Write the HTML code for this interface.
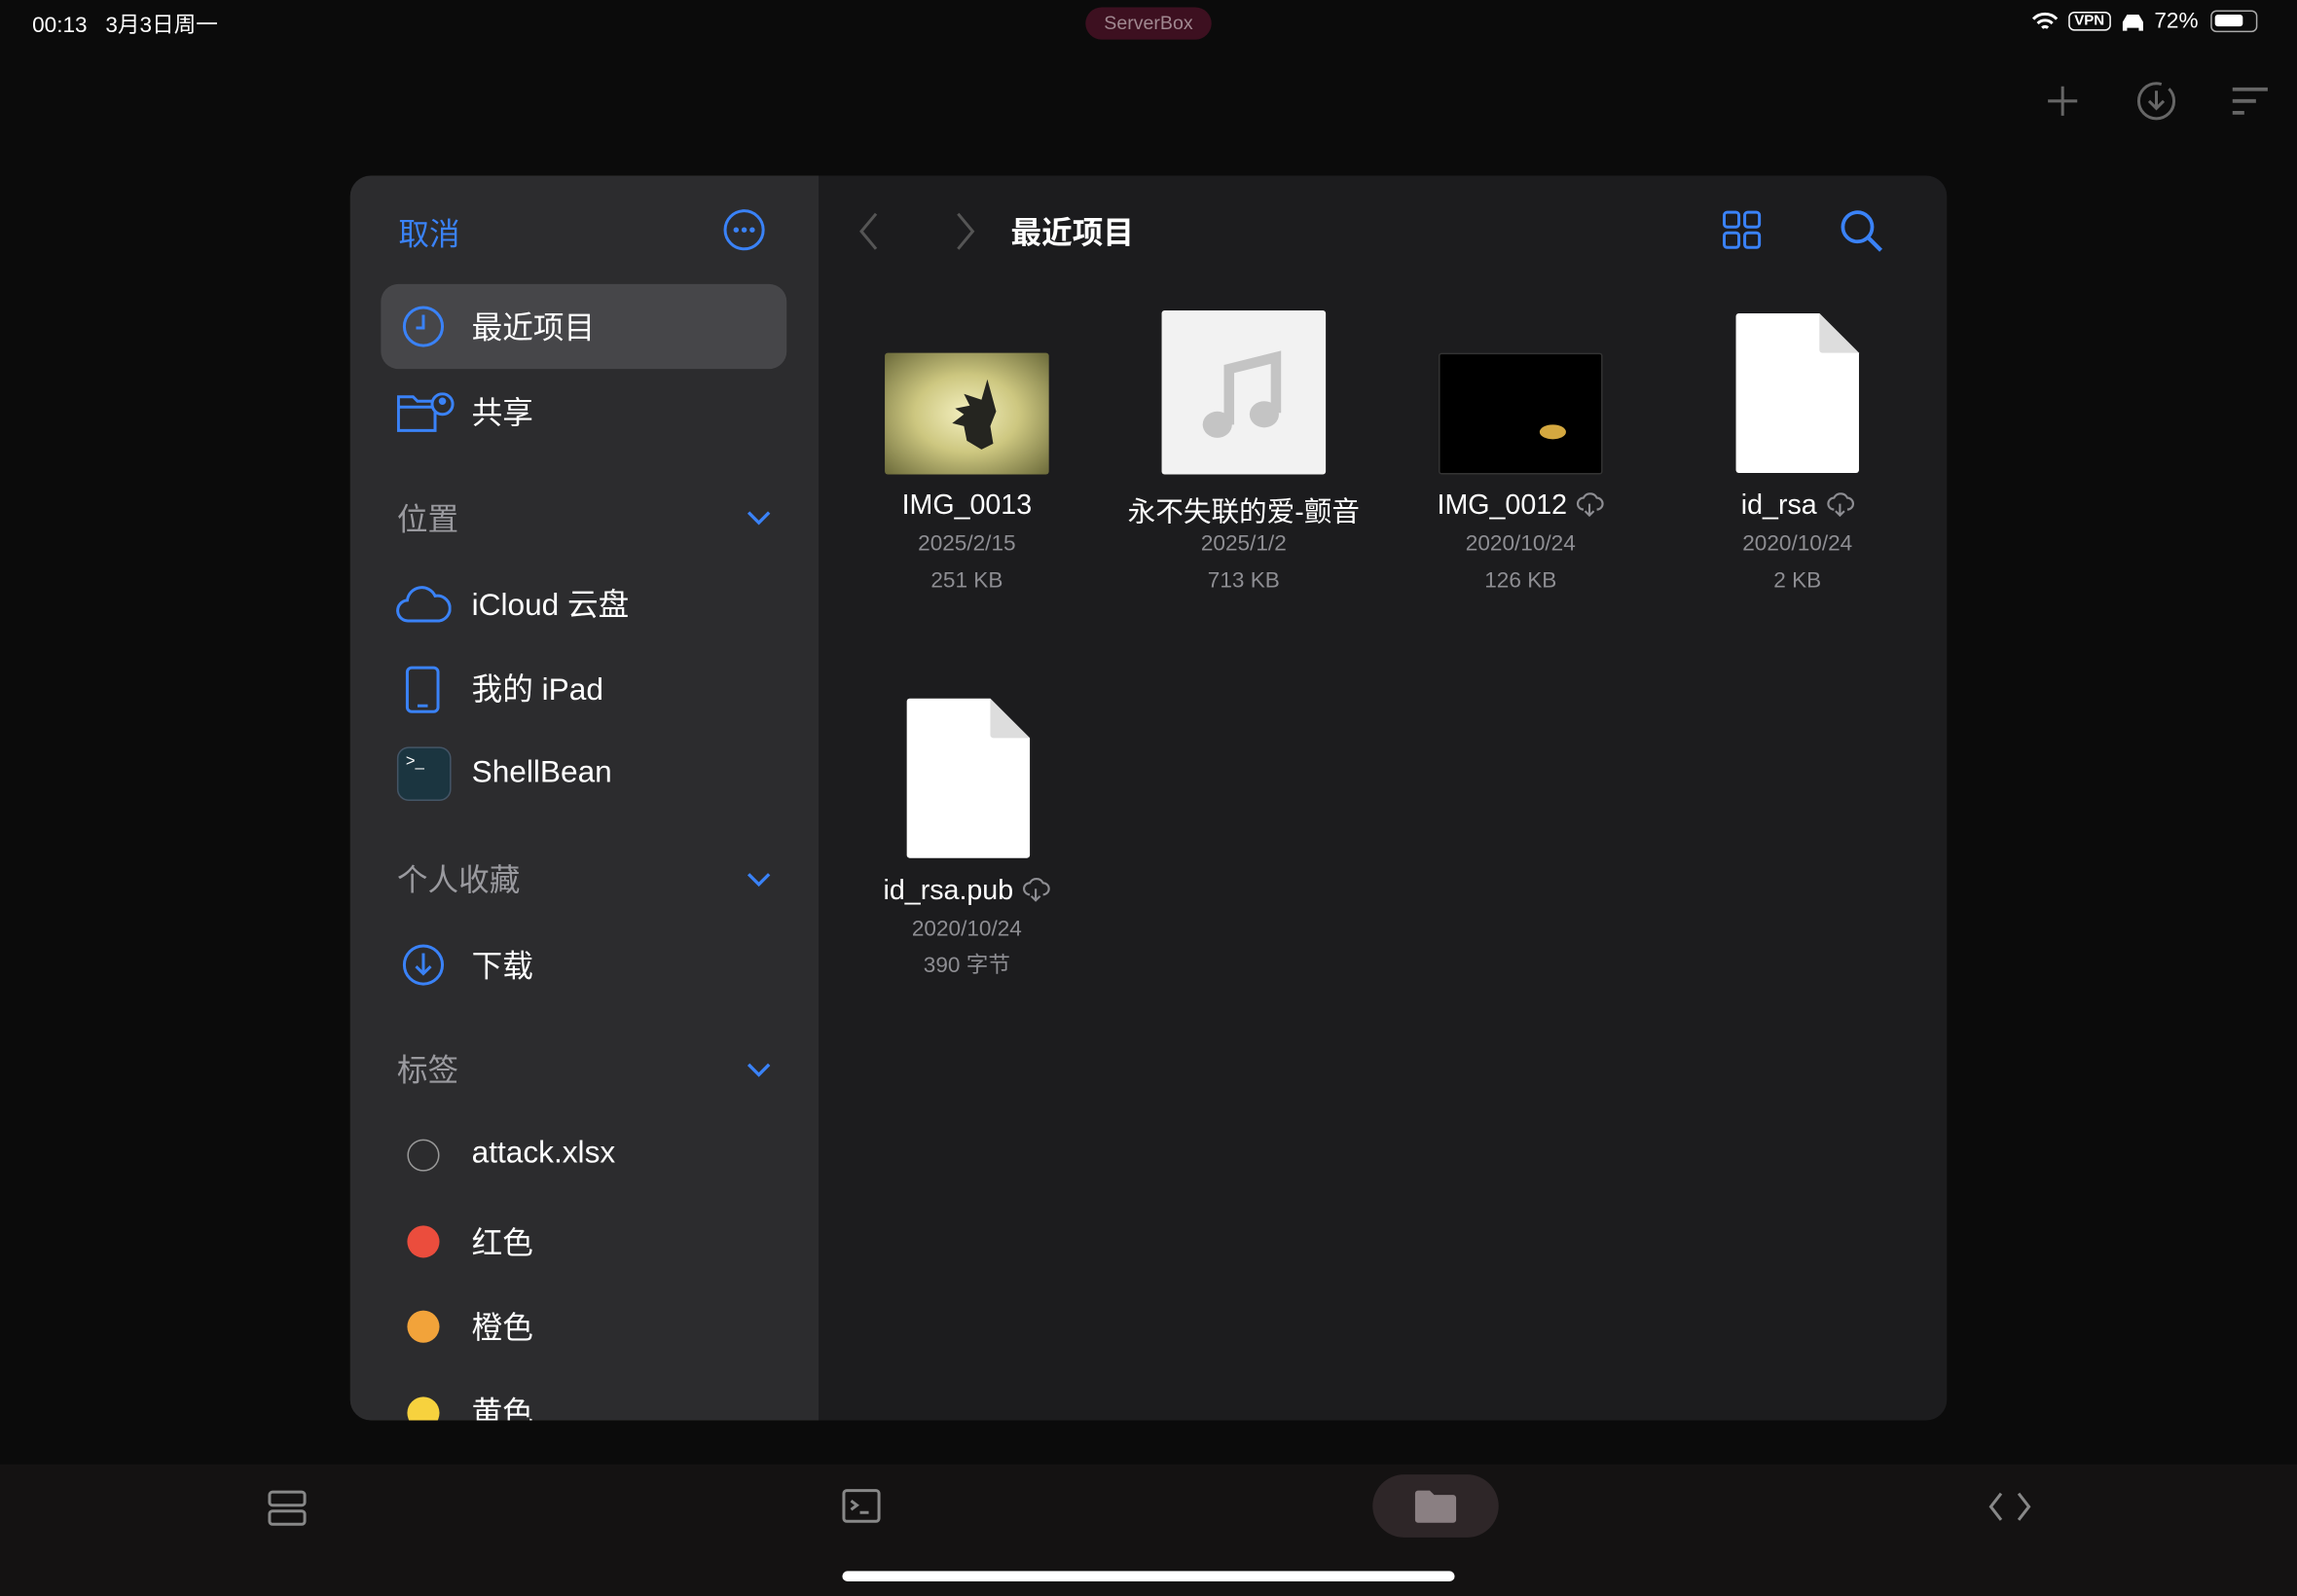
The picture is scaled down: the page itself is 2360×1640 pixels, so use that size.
<!DOCTYPE html>
<html><head><meta charset="utf-8"><style>
*{margin:0;padding:0;box-sizing:border-box}
html,body{width:2360px;height:1640px;overflow:hidden;background:#0b0b0b}
#s{position:absolute;left:0;top:0;width:1568px;height:1090px;transform:scale(1.50510,1.50459);transform-origin:0 0;font-family:"Liberation Sans","Noto Sans CJK SC",sans-serif;color:#fff}
.a{position:absolute}
.side{left:239px;top:120px;width:320px;height:850px;background:#2c2c2e;border-radius:14px 0 0 14px;overflow:hidden}
.main{left:559px;top:120px;width:770px;height:850px;background:#1c1c1e;border-radius:0 14px 14px 0}
.it{position:absolute;left:83px;font-size:21px;color:#fff}
.hd{position:absolute;left:32px;font-size:21px;color:#9a9a9f}
.chev{position:absolute;left:270px}
.fn{position:absolute;width:180px;text-align:center;font-size:19px;color:#fff}
.fd{position:absolute;width:180px;text-align:center;font-size:15px;color:#8e8e93;line-height:25px}
.dot{position:absolute;left:39px;width:22px;height:22px;border-radius:50%}
.cl{display:inline-block;vertical-align:-2px}
</style></head><body><div id="s">
<div class="a" style="left:22px;top:6px;font-size:15px">00:13&nbsp;&nbsp;&nbsp;3月3日周一</div>
<div class="a" style="left:741px;top:5px;width:86px;height:22px;border-radius:11px;background:#3d1020;color:#a08890;font-size:13px;text-align:center;line-height:22px">ServerBox</div>
<div class="a" style="left:1386px;top:6px;font-size:15px;display:flex;gap:6px;align-items:center">
<svg width="20" height="14" viewBox="0 0 20 14"><path d="M2 5a11 11 0 0 1 16 0M5 8a7 7 0 0 1 10 0M8 11a3 3 0 0 1 4 0" stroke="#fff" stroke-width="2" fill="none"/></svg>
<span style="border:1.5px solid #fff;border-radius:4px;font-size:10px;padding:0 3px;font-weight:bold">VPN</span>
<svg width="18" height="14"><path d="M2 7l3-5h8l3 5v6h-3v-2H5v2H2z" fill="#fff"/></svg><span>72%</span>
<span style="width:32px;height:15px;border:1.5px solid #aaa;border-radius:4px;position:relative;display:inline-block;margin-left:2px"><span style="position:absolute;left:2px;top:2px;width:19px;height:8px;background:#fff;border-radius:2px"></span></span></div>
<svg class="a" style="left:1396px;top:55px" width="160" height="28" viewBox="0 0 160 28"><path d="M12 4v20M2 14h20" stroke="#666" stroke-width="2"/><circle cx="76" cy="14" r="12" stroke="#666" stroke-width="2" fill="none" stroke-dasharray="60 6"/><path d="M76 7v12M71 14l5 5 5-5" stroke="#666" stroke-width="2" fill="none"/><path d="M128 6h24M128 14h16M128 22h8" stroke="#666" stroke-width="2.5"/></svg>

<div class="a side">
<div class="a" style="left:33px;top:24px;font-size:21px;color:#3a82f7">取消</div>
<svg class="a" style="left:254px;top:22px" width="30" height="30"><circle cx="15" cy="15" r="13" stroke="#3a82f7" stroke-width="2" fill="none"/><circle cx="9.5" cy="15" r="1.8" fill="#3a82f7"/><circle cx="15" cy="15" r="1.8" fill="#3a82f7"/><circle cx="20.5" cy="15" r="1.8" fill="#3a82f7"/></svg>
<div class="a" style="left:21px;top:74px;width:277px;height:58px;background:#464649;border-radius:12px"></div>
<svg class="a" style="left:35px;top:88px" width="30" height="30"><circle cx="15" cy="15" r="13" stroke="#3a82f7" stroke-width="2" fill="none"/><path d="M15 7v9h-5" stroke="#3a82f7" stroke-width="2" fill="none"/></svg>
<div class="it" style="top:88px">最近项目</div>
<svg class="a" style="left:32px;top:148px" width="40" height="30"><path d="M1 3h10l3 3h12v20H1z" stroke="#3a82f7" stroke-width="2" fill="none"/><path d="M1 10h24" stroke="#3a82f7" stroke-width="2"/><circle cx="31" cy="8" r="7" fill="#2c2c2e" stroke="#3a82f7" stroke-width="2"/><circle cx="31" cy="6" r="2.5" fill="#3a82f7"/></svg>
<div class="it" style="top:146px">共享</div>
<div class="hd" style="top:219px">位置</div>
<svg class="chev" style="top:228px" width="18" height="12"><path d="M2 2l7 7 7-7" stroke="#3a82f7" stroke-width="2.2" fill="none"/></svg>
<svg class="a" style="left:31px;top:278px" width="38" height="28"><path d="M9 26a7 7 0 0 1-1-14 10 10 0 0 1 19-3 8 8 0 0 1 3 17z" stroke="#3a82f7" stroke-width="2" fill="none"/></svg>
<div class="it" style="top:277px">iCloud 云盘</div>
<svg class="a" style="left:37px;top:334px" width="26" height="34"><rect x="2" y="2" width="21" height="30" rx="3" stroke="#3a82f7" stroke-width="2" fill="none"/><path d="M9 28h7" stroke="#3a82f7" stroke-width="2"/></svg>
<div class="it" style="top:335px">我的 iPad</div>
<div class="a" style="left:32px;top:390px;width:37px;height:37px;border-radius:8px;background:#1b3540;border:1px solid #456"><span style="position:absolute;left:5px;top:3px;font-size:11px;color:#fff">&gt;_</span></div>
<div class="it" style="top:396px">ShellBean</div>
<div class="hd" style="top:465px">个人收藏</div>
<svg class="chev" style="top:475px" width="18" height="12"><path d="M2 2l7 7 7-7" stroke="#3a82f7" stroke-width="2.2" fill="none"/></svg>
<svg class="a" style="left:35px;top:524px" width="30" height="30"><circle cx="15" cy="15" r="13" stroke="#3a82f7" stroke-width="2" fill="none"/><path d="M15 7v14M10 16l5 5 5-5" stroke="#3a82f7" stroke-width="2" fill="none"/></svg>
<div class="it" style="top:524px">下载</div>
<div class="hd" style="top:595px">标签</div>
<svg class="chev" style="top:605px" width="18" height="12"><path d="M2 2l7 7 7-7" stroke="#3a82f7" stroke-width="2.2" fill="none"/></svg>
<div class="dot" style="top:658px;border:1.5px solid #999"></div>
<div class="it" style="top:656px">attack.xlsx</div>
<div class="dot" style="top:717px;background:#eb4d3d"></div>
<div class="it" style="top:713px">红色</div>
<div class="dot" style="top:775px;background:#f2a33a"></div>
<div class="it" style="top:771px">橙色</div>
<div class="dot" style="top:834px;background:#f7d23e"></div>
<div class="it" style="top:829px">黄色</div>
</div>

<div class="a main">
<svg class="a" style="left:26px;top:24px" width="90" height="28"><path d="M13 2l-10 12 10 12M69 2l10 12-10 12" stroke="#555" stroke-width="2" fill="none"/></svg>
<div class="a" style="left:131px;top:23px;font-size:21px;font-weight:bold">最近项目</div>
<svg class="a" style="left:616px;top:23px" width="28" height="28"><g stroke="#3a82f7" stroke-width="2" fill="none"><rect x="2" y="2" width="10" height="10" rx="2"/><rect x="16" y="2" width="10" height="10" rx="2"/><rect x="2" y="16" width="10" height="10" rx="2"/><rect x="16" y="16" width="10" height="10" rx="2"/></g></svg>
<svg class="a" style="left:696px;top:22px" width="32" height="32"><circle cx="13" cy="13" r="10" stroke="#3a82f7" stroke-width="2.5" fill="none"/><path d="M20 20l9 9" stroke="#3a82f7" stroke-width="2.8"/></svg>

<div class="a" style="left:45px;top:121px;width:112px;height:83px;border-radius:2px;background:radial-gradient(ellipse at 50% 50%,#f4f0c0 0%,#cdc780 45%,#6b6a3a 100%)">
<svg style="position:absolute;left:36px;top:16px" width="44" height="52"><path d="M34 2l-4 14-12-4 4 8-10 2 6 4-8 6 8 2 2 10 10 6 8-4-2-12 4-10z" fill="#252520"/></svg></div>
<div class="a" style="left:234px;top:92px;width:112px;height:112px;background:#f2f2f2;border-radius:2px">
<svg style="position:absolute;left:24px;top:26px" width="60" height="64"><path d="M22 52V14l32-8v38" stroke="#c4c4c4" stroke-width="7" fill="none"/><ellipse cx="14" cy="52" rx="10" ry="9" fill="#c4c4c4"/><ellipse cx="46" cy="45" rx="10" ry="9" fill="#c4c4c4"/></svg></div>
<div class="a" style="left:423px;top:121px;width:112px;height:83px;background:#000;border:1px solid #333;border-radius:2px"><div style="position:absolute;left:68px;top:48px;width:18px;height:10px;background:#d4a840;border-radius:50%"></div></div>
<svg class="a" style="left:625px;top:93px" width="86" height="111"><path d="M3 1h55l27 27v80a2 2 0 0 1-2 2H3a2 2 0 0 1-2-2V3a2 2 0 0 1 2-2z" fill="#fff"/><path d="M58 1v25a2 2 0 0 0 2 2h25" fill="#ddd"/></svg>

<div class="fn" style="left:11px;top:215px">IMG_0013</div>
<div class="fd" style="left:11px;top:239px">2025/2/15<br>251 KB</div>
<div class="fn" style="left:200px;top:215px">永不失联的爱-颤音</div>
<div class="fd" style="left:200px;top:239px">2025/1/2<br>713 KB</div>
<div class="fn" style="left:389px;top:215px">IMG_0012 <svg class="cl" width="20" height="18"><path d="M6 13a4 4 0 0 1 0-8 5 5 0 0 1 9 0 4 4 0 0 1 0 8M10 9v8M7 14l3 3 3-3" stroke="#8e8e93" stroke-width="1.4" fill="none"/></svg></div>
<div class="fd" style="left:389px;top:239px">2020/10/24<br>126 KB</div>
<div class="fn" style="left:578px;top:215px">id_rsa <svg class="cl" width="20" height="18"><path d="M6 13a4 4 0 0 1 0-8 5 5 0 0 1 9 0 4 4 0 0 1 0 8M10 9v8M7 14l3 3 3-3" stroke="#8e8e93" stroke-width="1.4" fill="none"/></svg></div>
<div class="fd" style="left:578px;top:239px">2020/10/24<br>2 KB</div>

<svg class="a" style="left:59px;top:356px" width="86" height="111"><path d="M3 1h55l27 27v80a2 2 0 0 1-2 2H3a2 2 0 0 1-2-2V3a2 2 0 0 1 2-2z" fill="#fff"/><path d="M58 1v25a2 2 0 0 0 2 2h25" fill="#ddd"/></svg>
<div class="fn" style="left:11px;top:478px">id_rsa.pub <svg class="cl" width="20" height="18"><path d="M6 13a4 4 0 0 1 0-8 5 5 0 0 1 9 0 4 4 0 0 1 0 8M10 9v8M7 14l3 3 3-3" stroke="#8e8e93" stroke-width="1.4" fill="none"/></svg></div>
<div class="fd" style="left:11px;top:502px">2020/10/24<br>390 字节</div>
</div>

<div class="a" style="left:0;top:1000px;width:1568px;height:90px;background:#141212"></div>
<svg class="a" style="left:182px;top:1016px" width="28" height="28"><g stroke="#888" stroke-width="2" fill="none"><rect x="2" y="3" width="24" height="9" rx="2"/><rect x="2" y="16" width="24" height="9" rx="2"/></g></svg>
<svg class="a" style="left:574px;top:1016px" width="28" height="26"><rect x="2" y="2" width="24" height="21" rx="2" stroke="#888" stroke-width="2" fill="none"/><path d="M7 9l4 3-4 3M13 17h6" stroke="#888" stroke-width="2" fill="none"/></svg>
<div class="a" style="left:937px;top:1007px;width:86px;height:43px;border-radius:22px;background:#2e2628"></div>
<svg class="a" style="left:965px;top:1016px" width="30" height="26"><path d="M1 4a2 2 0 0 1 2-2h8l3 3h13a2 2 0 0 1 2 2v15a2 2 0 0 1-2 2H3a2 2 0 0 1-2-2z" fill="#8a7f82"/></svg>
<svg class="a" style="left:1357px;top:1018px" width="30" height="22"><path d="M9 2l-7 9 7 9M21 2l7 9-7 9" stroke="#888" stroke-width="2" fill="none"/></svg>
<div class="a" style="left:575px;top:1073px;width:418px;height:7px;border-radius:4px;background:#fff"></div>
</div></body></html>
